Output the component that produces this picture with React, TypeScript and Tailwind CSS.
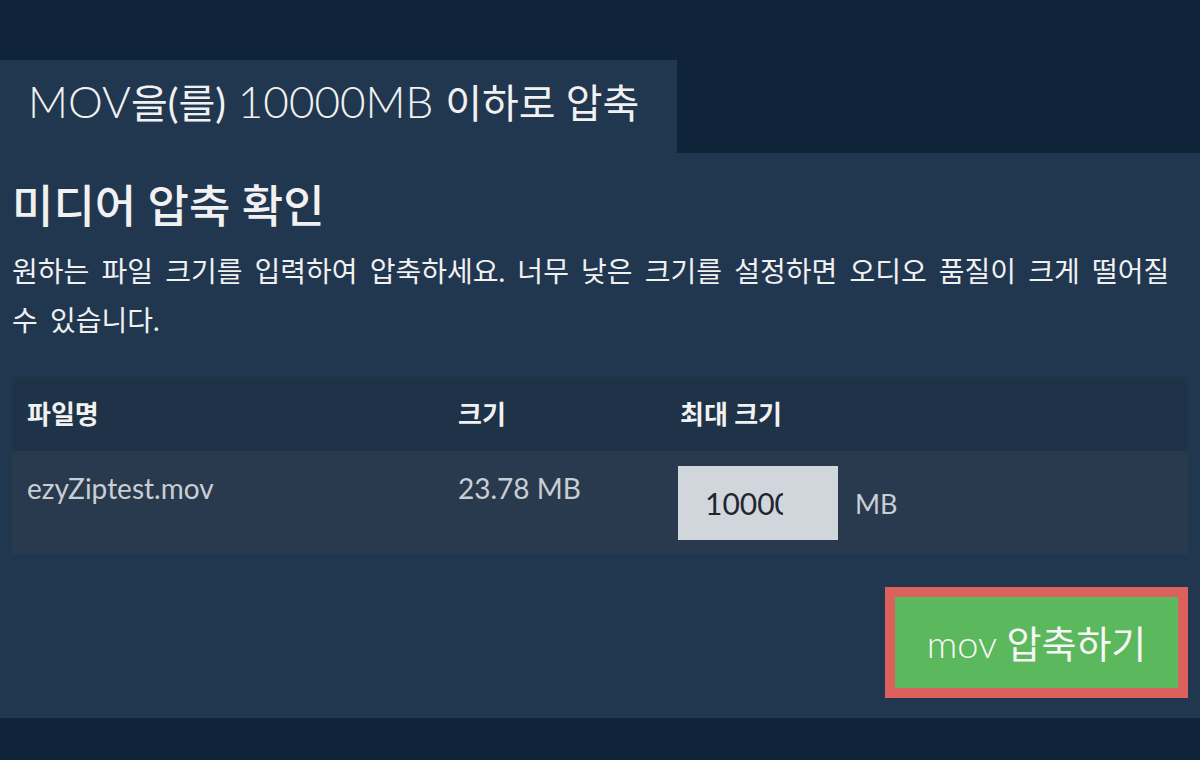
import React from 'react';

const font = "font-['Lato','Noto_Sans_CJK_KR',sans-serif]";

const App = () => {
    return (
        <div className={`w-[1200px] h-[760px] bg-[#0f2339] pt-[60px] ${font}`}>
            {/* tab */}
            <div className="w-[677px] h-[93px] bg-[#213750] pl-[28px] pt-[19px]">
                <h1 className="text-[44px] font-light text-[#f1f1f1] leading-none whitespace-nowrap">
                    MOV<span className="text-[40px] font-normal">을(를)</span> 10000MB <span className="text-[40px] font-normal">이하로 압축</span>
                </h1>
            </div>

            {/* panel */}
            <div className="bg-[#213750] h-[565px] px-[12px] pt-[26px]">
                <h2 className="text-[45px] font-medium text-[#f1f1f1] leading-[54px]">미디어 압축 확인</h2>
                <p className="mt-[14px] text-[28px] text-[#f1f1f1] leading-[49px] [word-spacing:5px]">
                    원하는 파일 크기를 입력하여 압축하세요. 너무 낮은 크기를 설정하면 오디오 품질이 크게 떨어질 수 있습니다.
                </p>

                <table className="mt-[32px] w-full border-collapse text-left">
                    <thead>
                        <tr className="bg-[#1e3248] h-[74px]">
                            <th className="w-[431px] pl-[15px] text-[26px] font-bold text-[#f1f1f1]">파일명</th>
                            <th className="w-[222px] pl-[15px] text-[26px] font-bold text-[#f1f1f1]">크기</th>
                            <th className="pl-[15px] text-[26px] font-bold text-[#f1f1f1]">최대 크기</th>
                        </tr>
                    </thead>
                    <tbody>
                        <tr className="bg-[#2a3a4e] h-[103px]">
                            <td className="pl-[15px] pt-[21px] align-top text-[28px] leading-[1.2] text-[#c9ced4]">ezyZiptest.mov</td>
                            <td className="pl-[15px] pt-[21px] align-top text-[28px] leading-[1.2] text-[#c9ced4]">23.78 MB</td>
                            <td className="pl-[13px] align-middle">
                                <div className="flex items-center gap-[17px]">
                                    <input
                                        type="text"
                                        defaultValue="10000000"
                                        className="w-[160px] h-[74px] bg-[#d1d6dc] pl-[27px] pr-[55px] text-[30px] text-[#1f2630] outline-none"
                                    />
                                    <span className="text-[27px] text-[#c9ced4] pt-[4px]">MB</span>
                                </div>
                            </td>
                        </tr>
                    </tbody>
                </table>

                <div className="flex justify-end mt-[33px]">
                    <button className="w-[303px] h-[111px] border-[10px] border-[#dc605c] bg-[#5cb85c] text-[#f7f7f7] text-[38px] font-light leading-none">
                        mov <span className="font-normal">압축하기</span>
                    </button>
                </div>
            </div>
        </div>
    );
};

export default App;
